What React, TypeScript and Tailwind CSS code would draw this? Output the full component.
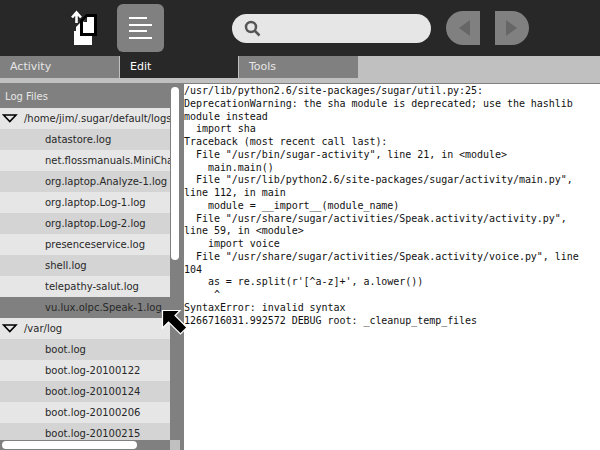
const FONT_SANS = "font-['DejaVu_Sans',sans-serif]";

const TREE = [
  { label: "/home/jim/.sugar/default/logs", folder: true },
  { label: "datastore.log" },
  { label: "net.flossmanuals.MiniChat-1.log" },
  { label: "org.laptop.Analyze-1.log" },
  { label: "org.laptop.Log-1.log" },
  { label: "org.laptop.Log-2.log" },
  { label: "presenceservice.log" },
  { label: "shell.log" },
  { label: "telepathy-salut.log" },
  { label: "vu.lux.olpc.Speak-1.log", selected: true },
  { label: "/var/log", folder: true },
  { label: "boot.log" },
  { label: "boot.log-20100122" },
  { label: "boot.log-20100124" },
  { label: "boot.log-20100206" },
  { label: "boot.log-20100215" },
];

const LOG_LINES = [
  "/usr/lib/python2.6/site-packages/sugar/util.py:25:",
  "DeprecationWarning: the sha module is deprecated; use the hashlib",
  "module instead",
  "  import sha",
  "Traceback (most recent call last):",
  '  File "/usr/bin/sugar-activity", line 21, in <module>',
  "    main.main()",
  '  File "/usr/lib/python2.6/site-packages/sugar/activity/main.py",',
  "line 112, in main",
  "    module = __import__(module_name)",
  '  File "/usr/share/sugar/activities/Speak.activity/activity.py",',
  "line 59, in <module>",
  "    import voice",
  '  File "/usr/share/sugar/activities/Speak.activity/voice.py", line',
  "104",
  "    as = re.split(r'[^a-z]+', a.lower())",
  "     ^",
  "SyntaxError: invalid syntax",
  "1266716031.992572 DEBUG root: _cleanup_temp_files",
];

function KeepIcon() {
  return (
    <svg width="30" height="38" viewBox="0 0 30 38" className="shrink-0">
      {/* arrow */}
      <path d="M6.5 14 V4 M2 8.5 L6.5 3.5 L11 8.5" fill="none" stroke="#fff" strokeWidth="2.6" />
      {/* back page */}
      <path d="M4 22 H22 V36 H4 Z" fill="#fff" />
      <path d="M6 18 L10 18 L10 22 L6 22 Z" fill="#fff" />
      <path d="M6 18 L10 14 L10 18 Z" fill="#fff" />
      {/* front page */}
      <path d="M17 6.5 H25.5 V25.5 H11.5 V12 Z" fill="#fff" stroke="#000" strokeWidth="3" />
      <path d="M17 8 V13 H13 Z" fill="#282828" />
    </svg>
  );
}

function ToolbarTab({ label, width, active }: { label: string; width: string; active?: boolean }) {
  return (
    <div
      className={`${width} h-full pl-[10px] flex items-center text-[11px] border-r border-[#c0c0c0] ${
        active ? "bg-[#282828] text-white" : "bg-[#808080] text-[#e6e6e6]"
      }`}
    >
      {label}
    </div>
  );
}

export default function App() {
  return (
    <div className={`w-[600px] h-[450px] overflow-hidden flex flex-col bg-white relative ${FONT_SANS}`}>
      {/* Top toolbar */}
      <div className="h-[56px] shrink-0 bg-[#282828] flex items-center">
        <div className="w-[70px] shrink-0" />
        <KeepIcon />
        <div className="ml-[17px] w-[47px] h-[48px] rounded-md bg-[#808080] flex flex-col justify-center gap-[4.5px] pl-[12px]">
          <div className="w-[18px] h-[2px] bg-white" />
          <div className="w-[23px] h-[2px] bg-white" />
          <div className="w-[18px] h-[2px] bg-white" />
          <div className="w-[23px] h-[2px] bg-white" />
        </div>
        <div className="ml-[68px] w-[199px] h-[29px] rounded-full bg-[#e6e6e6] flex items-center pl-[12px]">
          <svg width="17" height="17" viewBox="0 0 17 17" fill="none" stroke="#555" strokeWidth="2.5">
            <circle cx="7" cy="7" r="5" />
            <path d="M10.5 10.5 L15.5 15.5" />
          </svg>
        </div>
        <div className="ml-[15px] w-[34px] h-[34px] rounded-l-full bg-[#808080] flex items-center justify-center">
          <div className="w-0 h-0 border-y-[8px] border-y-transparent border-r-[11px] border-r-[#666] ml-[2px]" />
        </div>
        <div className="ml-[15px] w-[34px] h-[34px] rounded-r-full bg-[#808080] flex items-center justify-center">
          <div className="w-0 h-0 border-y-[8px] border-y-transparent border-l-[11px] border-l-[#666] mr-[2px]" />
        </div>
      </div>

      {/* Tabs */}
      <div className="h-[22px] shrink-0 bg-[#c0c0c0] flex">
        <ToolbarTab label="Activity" width="w-[120px]" />
        <ToolbarTab label="Edit" width="w-[119px]" active />
        <ToolbarTab label="Tools" width="w-[120px]" />
      </div>
      <div className="h-[5px] shrink-0 bg-[#c0c0c0]" />
      <div className="h-[1px] shrink-0 bg-[#808080]" />

      {/* Panes */}
      <div className="flex-1 min-h-0 flex">
        <div className="w-[184px] shrink-0 flex flex-col bg-[#808080]">
          <div className="flex-1 min-h-0 flex">
            <div className="w-[170px] shrink-0 overflow-hidden">
              <div className="h-[24px] pl-[5px] flex items-center text-[10px] text-[#e6e6e6]">Log Files</div>
              {TREE.map((row, i) => (
                <div
                  key={row.label}
                  className={`h-[21px] flex items-center whitespace-nowrap text-[10px] text-[#282828] ${
                    row.selected ? "bg-[#808080]" : i % 2 === 0 ? "bg-[#e6e6e6]" : "bg-[#d4d4d4]"
                  } ${row.folder ? "pl-[2px]" : "pl-[45px]"}`}
                >
                  {row.folder && (
                    <svg width="16" height="9" viewBox="0 0 16 9" className="mr-[6px] shrink-0">
                      <path d="M1.5 1 H14 L7.8 7.5 Z" fill="none" stroke="#000" strokeWidth="1.6" />
                    </svg>
                  )}
                  {row.label}
                </div>
              ))}
            </div>
            <div className="w-[14px] shrink-0 pl-[1px] pt-[3px]">
              <div className="w-[8px] h-[173px] rounded-full bg-white" />
            </div>
          </div>
          <div className="h-[10px] shrink-0 flex">
            <div className="w-[170px] shrink-0 pl-[2px]">
              <div className="w-[135px] h-[8px] rounded-full bg-white mt-[1px]" />
            </div>
            <div className="w-[10px] bg-[#c0c0c0]" />
          </div>
        </div>
        <pre className="flex-1 min-w-0 overflow-hidden pt-[1px] font-['DejaVu_Sans_Mono',monospace] text-[10px] tracking-[-0.04px] leading-[12.75px] text-[#111]">
          {LOG_LINES.join("\n")}
        </pre>
      </div>

      {/* Mouse pointer */}
      <svg width="28" height="28" viewBox="0 0 28 28" className="absolute left-[161px] top-[309px]">
        <path d="M1.5 1.5 H19 L14 6.5 L26 18.5 L19.5 25 L7.5 13 L1.5 19 Z" fill="#000" stroke="#fff" strokeWidth="1.2" />
      </svg>
    </div>
  );
}
